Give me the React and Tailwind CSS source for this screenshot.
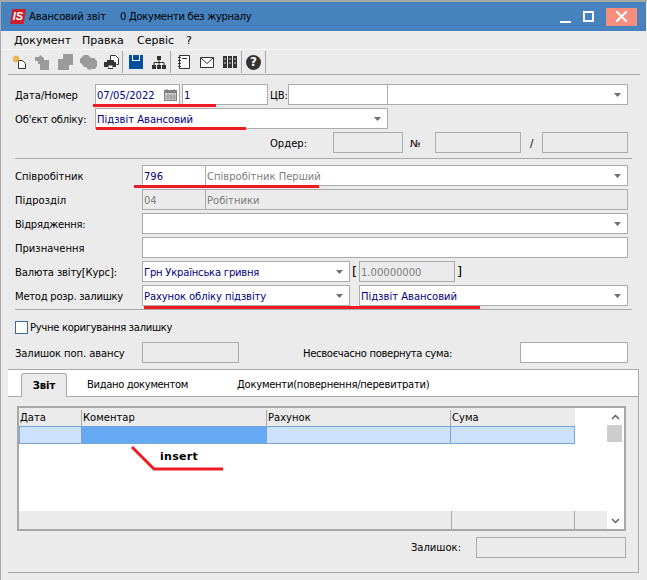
const Arrow = () => (
  <svg width="7" height="4" viewBox="0 0 7 4" className="shrink-0">
    <path d="M0 0h7L3.5 4z" fill="#6e6e6e" />
  </svg>
);

const Field = ({ className = "", disabled, text, muted, children }) => (
  <div
    className={`h-[21px] border border-[#ababab] flex items-center pl-[1px] shrink-0 truncate ${
      disabled ? "bg-[#ebebeb]" : "bg-white"
    } ${muted || disabled ? "text-[#7d7d7d]" : "text-[#00007f]"} ${className}`}
  >
    {text && <span className="mt-[2px]">{text}</span>}
    {children}
  </div>
);

const Combo = ({ className = "", text, muted }) => (
  <div
    className={`h-[21px] border border-[#ababab] bg-white flex items-center justify-between pl-[1px] pr-[6px] shrink-0 ${
      muted ? "text-[#7d7d7d]" : "text-[#00007f]"
    } ${className}`}
  >
    <span className="mt-[2px]">{text}</span>
    <Arrow />
  </div>
);

const Label = ({ className = "w-[127px]", children }) => (
  <div className={`shrink-0 text-black mt-[2px] ${className}`}>{children}</div>
);

const Row = ({ children, className = "" }) => (
  <div className={`flex items-center h-[21px] ${className}`}>{children}</div>
);

const Tool = ({ children }) => (
  <div className="w-[23px] h-[24px] flex items-center justify-center shrink-0">{children}</div>
);

const Sep = () => <div className="w-[1px] h-[22px] bg-[#a8a8a8] shrink-0" />;

const NewIcon = () => (
  <svg width="15" height="15" viewBox="0 0 15 15">
    <path d="M6.5 5.5h4l3 3v5h-7z" fill="#fff" stroke="#333" />
    <path d="M4 0.5v7M0.5 4h7M1.5 1.5l5 5M6.5 1.5l-5 5" stroke="#e8961e" strokeWidth="1.2" />
    <circle cx="4" cy="4" r="1.5" fill="#f7c948" />
  </svg>
);

const GrayA = () => (
  <svg width="15" height="15" viewBox="0 0 15 15">
    <path d="M0 2h4l1-2 4 3v2h5v10H5V9H3V6H0z" fill="#9a9a9a" />
  </svg>
);

const GrayB = () => (
  <svg width="15" height="16" viewBox="0 0 15 16">
    <path d="M5 0h10v11h-4v5H0V5h5z" fill="#9a9a9a" />
  </svg>
);

const GrayC = () => (
  <svg width="17" height="15" viewBox="0 0 17 15">
    <path d="M1 3l3-3h4l3 3h3l3 3v5l-2 3h-3l-3 1-3-3H4L1 8H0V4z" fill="#9a9a9a" />
  </svg>
);

const PrintIcon = () => (
  <svg width="15" height="14" viewBox="0 0 15 14">
    <path d="M6.5 5V.5h5l3 3v6h-2" fill="#fff" stroke="#333" />
    <path d="M3 5h7v2H3z" fill="#333" />
    <path d="M0 7h12v5H9v2H4v-2H0z" fill="#333" />
    <path d="M4.5 10.5h4v2.5h-4z" fill="#fff" />
  </svg>
);

const SaveIcon = () => (
  <svg width="14" height="14" viewBox="0 0 14 14">
    <path d="M0 0h14v14H0z" fill="#00519e" />
    <path d="M3 0h8v6H3z" fill="#fff" />
    <path d="M4 0h6v5H4z" fill="#00519e" />
  </svg>
);

const TreeIcon = () => (
  <svg width="14" height="13" viewBox="0 0 14 13">
    <path d="M5 0h4v4H5zM0 9h4v4H0zM5 9h4v4H5zM10 9h4v4h-4z" fill="#333" />
    <path d="M7 4v5M2 9V6.500h10V9" fill="none" stroke="#333" />
  </svg>
);

const NoteIcon = () => (
  <svg width="13" height="14" viewBox="0 0 13 14">
    <path d="M2.500.5h10v13h-10z" fill="#fff" stroke="#333" />
    <path d="M5 3.500h5" stroke="#333" />
    <path d="M1 2.500h3M1 5.500h3M1 8.500h3M1 11.500h3" stroke="#333" />
  </svg>
);

const MailIcon = () => (
  <svg width="14" height="11" viewBox="0 0 14 11">
    <path d="M.5.5h13v10H.5z" fill="#fff" stroke="#333" />
    <path d="M1 1l6 5.500L13 1" fill="none" stroke="#333" />
  </svg>
);

const BooksIcon = () => (
  <svg width="14" height="12" viewBox="0 0 14 12">
    <path d="M0 0h4v12H0zM5 0h4v12H5zM10 0h4v12h-4z" fill="#333" />
    <path d="M1 3h2M6 3h2M11 3h2M1 7h2M6 7h2M11 7h2" stroke="#ddd" />
  </svg>
);

const HelpIcon = () => (
  <div className="w-[15px] h-[15px] rounded-full bg-[#333] text-white flex items-center justify-center font-bold text-[12px] leading-none">
    ?
  </div>
);

const App = () => {
  return (
    <div className="relative w-[647px] h-[580px] overflow-hidden bg-[#ebebeb] border-t-2 border-l border-[#a8a8a8] text-[10px] leading-none text-black font-['DejaVu_Sans',sans-serif]">
      <div className="h-[29px] mr-[1px] bg-[#4682bd] flex items-center relative">
        <div className="ml-[9px] w-[16px] h-[15px] bg-[#c8202c] text-white italic font-bold text-[11px] flex items-center justify-center shrink-0 font-['Liberation_Sans',sans-serif] [clip-path:polygon(15%_0,100%_0,85%_100%,0_100%)]">
          IS
        </div>
        <span className="ml-[3px] w-[91px] tracking-[-0.15px]">Авансовий звіт</span>
        <span className="tracking-[-0.3px]">0 Документи без журналу</span>
        <div className="ml-auto flex items-center">
          <div className="w-[11px] h-[2px] bg-white mt-[11px] mr-[12px]" />
          <div className="w-[11px] h-[11px] border-2 border-white mr-[12px]" />
          <div className="w-[31px] h-[18px] bg-[#f78d7c] flex items-center justify-center mr-[9px]">
            <svg width="11" height="11" viewBox="0 0 11 11">
              <path d="M0 0l11 11M11 0L0 11" stroke="#fff" strokeWidth="2" />
            </svg>
          </div>
        </div>
      </div>

      <div className="h-[19px] mr-[7px] flex items-center border-b border-[#f4f4f4] pl-[13px] text-[11px]">
        <span className="w-[68px]">Документ</span>
        <span className="w-[55px]">Правка</span>
        <span className="w-[49px]">Сервіс</span>
        <span>?</span>
      </div>

      <div className="h-[25px] mr-[7px] ml-[7px] border-b border-[#a8a8a8] flex items-center">
        <Tool><NewIcon /></Tool>
        <Tool><GrayA /></Tool>
        <Tool><GrayB /></Tool>
        <Tool><GrayC /></Tool>
        <Tool><PrintIcon /></Tool>
        <div className="-ml-[1px]"><Sep /></div>
        <div className="w-[1px]" />
        <Tool><SaveIcon /></Tool>
        <Tool><TreeIcon /></Tool>
        <Sep />
        <div className="w-[1px]" />
        <Tool><NoteIcon /></Tool>
        <Tool><MailIcon /></Tool>
        <Tool><BooksIcon /></Tool>
        <Sep />
        <Tool><HelpIcon /></Tool>
        <Sep />
      </div>

      <div className="pl-[14px] pr-[19px] pt-[9px] flex flex-col gap-[3px]">
        <Row>
          <Label className="w-[80px]">Дата/Номер</Label>
          <Field className="w-[85px] justify-between pr-[2px]" text="07/05/2022">
            <svg width="13" height="12" viewBox="0 0 13 12">
              <path d="M0 1h13v11H0z" fill="#808080" />
              <path d="M3 0v2M10 0v2" stroke="#808080" />
              <path d="M1 4h11v7H1z" fill="#d8d8d8" />
              <path d="M4 4v7M7 4v7M10 4v7M1 7h11M1 9h11" stroke="#808080" strokeWidth=".7" />
            </svg>
          </Field>
          <Field className="w-[86px] ml-[2px]" text="1" />
          <span className="ml-[2px] mt-[2px] w-[18px] whitespace-nowrap">ЦВ:</span>
          <Field className="w-[100px]" />
          <Combo className="flex-1 -ml-[1px]" />
        </Row>
        <Row>
          <Label className="w-[80px] tracking-[-0.2px]">Об'єкт обліку:</Label>
          <Combo className="w-[293px]" text="Підзвіт Авансовий" />
        </Row>
        <Row>
          <div className="ml-[255px] mt-[2px] w-[63px]">Ордер:</div>
          <Field disabled className="w-[70px]" />
          <span className="ml-[7px] mt-[2px] w-[25px]">№</span>
          <Field disabled className="w-[86px]" />
          <span className="ml-[9px] mt-[2px] w-[12px]">/</span>
          <Field disabled className="flex-1" />
        </Row>

        <div className="h-[1px] bg-[#a8a8a8] mt-[2px] mb-[3px] -mr-[4px]" />

        <Row>
          <Label>Співробітник</Label>
          <Field className="w-[64px]" text="796" />
          <Combo className="flex-1 -ml-[1px]" text="Співробітник Перший" muted />
        </Row>
        <Row>
          <Label>Підрозділ</Label>
          <Field disabled className="w-[64px]" text="04" />
          <Field disabled className="flex-1 -ml-[1px]" text="Робітники" />
        </Row>
        <Row>
          <Label className="w-[127px] tracking-[-0.25px]">Відрядження:</Label>
          <Combo className="flex-1" />
        </Row>
        <Row>
          <Label>Призначення</Label>
          <Field className="flex-1" />
        </Row>
        <Row>
          <Label className="w-[127px] tracking-[-0.15px]">Валюта звіту[Курс]:</Label>
          <Combo className="w-[208px] tracking-[-0.2px]" text="Грн Українська гривня" />
          <span className="ml-[2px] w-[7px] text-[13px]">[</span>
          <Field disabled className="w-[96px]" text="1.00000000" />
          <span className="ml-[2px] text-[13px]">]</span>
        </Row>
        <Row>
          <Label className="w-[127px] tracking-[-0.25px]">Метод розр. залишку</Label>
          <Combo className="w-[208px] tracking-[-0.1px]" text="Рахунок обліку підзвіту" />
          <Combo className="flex-1 ml-[9px]" text="Підзвіт Авансовий" />
        </Row>

        <div className="h-[1px] bg-[#a8a8a8] mt-[0px] -mr-[4px]" />

        <label className="flex items-center h-[13px] mt-[8px] mb-[5px]">
          <span className="w-[13px] h-[13px] border border-[#3c6a96] bg-white shrink-0" />
          <span className="ml-[2px] tracking-[-0.3px]">Ручне коригування залишку</span>
        </label>

        <Row>
          <Label className="w-[127px] tracking-[-0.1px]">Залишок поп. авансу</Label>
          <Field disabled className="w-[97px]" />
          <span className="ml-[64px] mt-[2px] w-[217px] tracking-[-0.3px]">Несвоєчасно повернута сума:</span>
          <Field className="flex-1" />
        </Row>
      </div>

      <div className="mt-[6px] ml-[7px] mr-[8px] h-[204px] border-r border-b border-[#a8a8a8] flex flex-col">
        <div className="h-[28px] bg-white border-t border-b border-[#a8a8a8] flex items-end pl-[13px]">
          <div className="w-[46px] h-[24px] -mb-[1px] bg-[#ebebeb] border border-b-0 border-[#a8a8a8] rounded-t-[3px] flex items-center justify-center font-bold">
            Звіт
          </div>
          <div className="h-[23px] flex items-center ml-[20px] w-[150px] tracking-[-0.35px]">Видано документом</div>
          <div className="h-[23px] flex items-center tracking-[-0.25px]">Документи(повернення/перевитрати)</div>
        </div>

        <div className="mt-[9px] ml-[9px] mr-[12px] h-[125px] border-2 border-[#a8a8a8] flex">
          <div className="flex-1 flex flex-col bg-white">
            <div className="h-[18px] flex bg-[#ebebeb] w-[556px] pt-[2px]">
              <div className="w-[63px] border-r border-[#a8a8a8] pl-[1px] flex items-center">Дата</div>
              <div className="w-[185px] border-r border-[#a8a8a8] pl-[1px] flex items-center">Коментар</div>
              <div className="w-[184px] border-r border-[#a8a8a8] pl-[1px] flex items-center">Рахунок</div>
              <div className="flex-1 pl-[1px] flex items-center">Сума</div>
            </div>
            <div className="h-[18px] flex w-[556px] border border-[#7ba4d4]">
              <div className="w-[62px] bg-[#cce1fb] border-r border-[#7ba4d4]" />
              <div className="w-[185px] bg-[#66aaf4] border-r border-[#7ba4d4]" />
              <div className="w-[184px] bg-[#cce1fb] border-r border-[#7ba4d4]" />
              <div className="flex-1 bg-[#cce1fb]" />
            </div>
            <div className="flex-1" />
            <div className="h-[18px] flex bg-[#ebebeb]">
              <div className="w-[433px] border-r border-[#a8a8a8]" />
              <div className="w-[123px] border-r border-[#a8a8a8]" />
            </div>
          </div>
          <div className="w-[17px] bg-white flex flex-col items-center">
            <div className="h-[17px] flex items-center justify-center">
              <svg width="9" height="6" viewBox="0 0 9 6">
                <path d="M1 5l3.500-3.500L8 5" fill="none" stroke="#606060" strokeWidth="1.500" />
              </svg>
            </div>
            <div className="w-[15px] self-start h-[17px] bg-[#cdcdcd]" />
            <div className="flex-1" />
            <div className="h-[17px] flex items-center justify-center">
              <svg width="9" height="6" viewBox="0 0 9 6">
                <path d="M1 1l3.500 3.500L8 1" fill="none" stroke="#606060" strokeWidth="1.500" />
              </svg>
            </div>
          </div>
        </div>

        <div className="mt-[6px] mr-[12px] flex items-center justify-end">
          <span className="mr-[15px]">Залишок:</span>
          <Field disabled className="w-[150px]" />
        </div>
      </div>

      {/* red marks drawn over the form */}
      <div className="absolute left-[92px] top-[102px] w-[123px] h-[3px] bg-[#ed1c24]" />
      <div className="absolute left-[95px] top-[125px] w-[150px] h-[3px] bg-[#ed1c24]" />
      <div className="absolute left-[133px] top-[183px] w-[185px] h-[3px] bg-[#ed1c24]" />
      <div className="absolute left-[143px] top-[304px] w-[336px] h-[3px] bg-[#ed1c24]" />
      <svg className="absolute left-[125px] top-[440px]" width="100" height="30" viewBox="0 0 100 30">
        <path d="M6 5l22 22h69" fill="none" stroke="#ed1c24" strokeWidth="3" />
      </svg>
      <div className="absolute left-[159px] top-[449px] text-[11px] font-bold tracking-[0.3px]">insert</div>
    </div>
  );
};

export default App;
